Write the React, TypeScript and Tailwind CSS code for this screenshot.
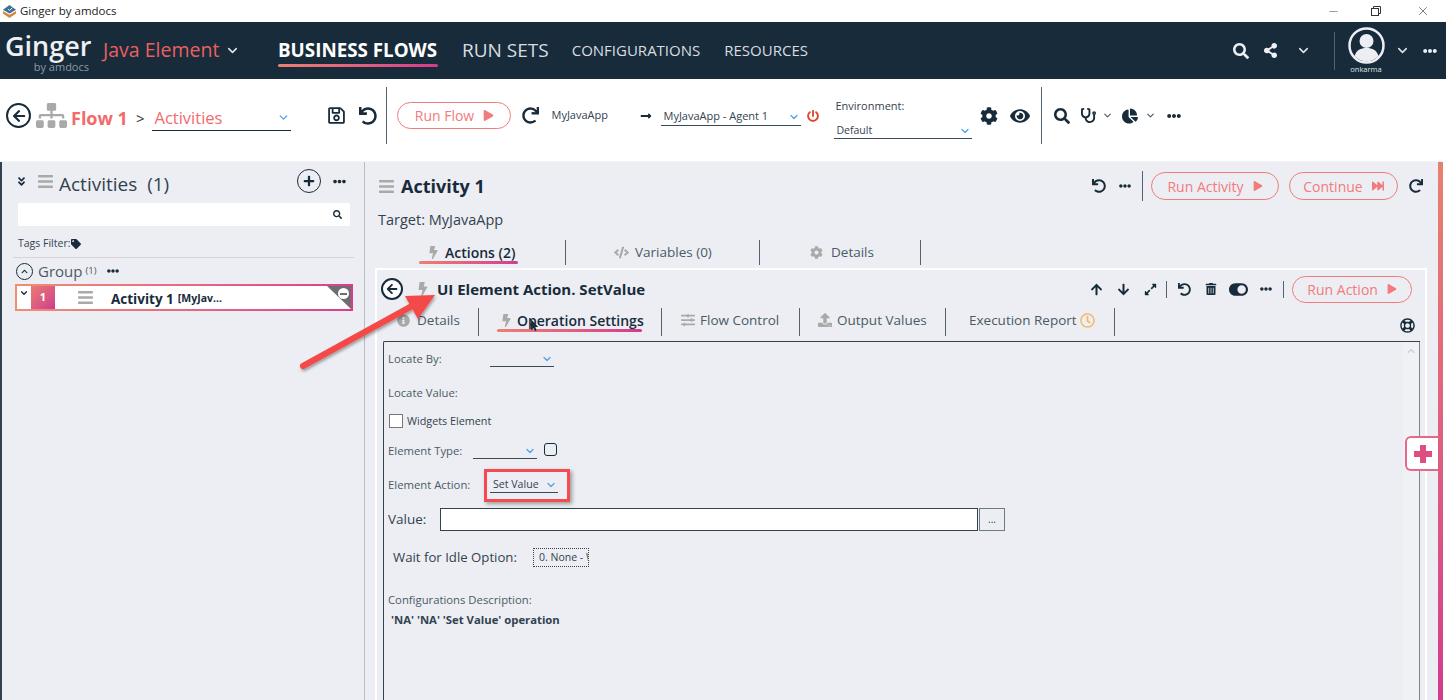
import {
  FaArrowDown,
  FaArrowUp,
  FaBars,
  FaBolt,
  FaChartPie,
  FaChevronUp,
  FaCode,
  FaCog,
  FaEllipsisH,
  FaExpandAlt,
  FaEye,
  FaFastForward,
  FaInfoCircle,
  FaRegLifeRing,
  FaLongArrowAltRight,
  FaPlay,
  FaPlus,
  FaPowerOff,
  FaRedo,
  FaRegClock,
  FaRegSave,
  FaSearch,
  FaShareAlt,
  FaSitemap,
  FaStethoscope,
  FaTag,
  FaToggleOn,
  FaTrashAlt,
  FaUndo,
  FaUpload,
  FaAngleDoubleDown,
  FaArrowLeft,
  FaMousePointer,
  FaSlidersH,
} from "react-icons/fa";
import { ChevronDown, Minus, X } from "lucide-react";
import type { ReactNode } from "react";

const dark = "#172b3a";

function BackCircle({ size }: { size: "lg" | "md" }) {
  return (
    <span
      className={
        size === "lg"
          ? "flex h-[25px] w-[25px] shrink-0 items-center justify-center rounded-full border-2 border-[#172b3a] bg-white"
          : "flex h-[22px] w-[22px] shrink-0 items-center justify-center rounded-full border-2 border-[#172b3a] bg-white"
      }
    >
      <FaArrowLeft size={size === "lg" ? 14 : 12} color={dark} />
    </span>
  );
}

function Chevron({ color = "#4da3e8", size = 14 }: { color?: string; size?: number }) {
  return <ChevronDown size={size} color={color} strokeWidth={2.5} />;
}

function RunButton({ label, wide, icon, height }: { label: string; wide: string; icon: ReactNode; height: string }) {
  return (
    <span
      className={`flex shrink-0 items-center justify-center gap-[9px] rounded-full border border-[#f27b7b] text-[14px] text-[#f27b7b] ${wide} ${height}`}
    >
      {label}
      {icon}
    </span>
  );
}

function Underline({ className }: { className: string }) {
  return <span className={`block h-[3px] rounded-sm bg-linear-to-r from-[#ea8070] to-[#d43a8c] ${className}`} />;
}

function Divider({ className }: { className: string }) {
  return <span className={`block w-px shrink-0 bg-[#55636f] ${className}`} />;
}

function Avatar() {
  return (
    <svg width="37" height="37" viewBox="0 0 37 37">
      <circle cx="18.5" cy="18.5" r="17" fill="none" stroke="#eceef3" strokeWidth="2.5" />
      <circle cx="18.5" cy="14" r="7" fill="#eceef3" />
      <path d="M6.5 29c2-6 6-8 12-8s10 2 12 8a16 16 0 0 1-24 0z" fill="#eceef3" />
    </svg>
  );
}

function TitleBar() {
  return (
    <div className="flex h-[22px] shrink-0 items-center bg-white pl-[2px] text-[11.5px] text-[#222]">
      <svg width="15" height="15" viewBox="0 0 16 16">
        <path d="M8 1l7 5-7 4-7-4z" fill="#3f6f96" />
        <path d="M1 7.5l7 4 7-4v2.5l-7 5-7-5z" fill="#d9863c" />
        <path d="M6.5 5.5l1.5 1.5 3-3" stroke="#fff" strokeWidth="1" fill="none" />
      </svg>
      <span className="ml-[3px]">Ginger by amdocs</span>
      <span className="ml-auto flex items-center">
        <Minus size={13} color="#666" strokeWidth={1.2} className="mr-[31px]" />
        <svg width="10" height="10" viewBox="0 0 10 10" className="mr-[35px]">
          <rect x="0.5" y="2.5" width="7" height="7" fill="none" stroke="#333" />
          <path d="M2.5 2.5v-2h7v7h-2" fill="none" stroke="#333" />
        </svg>
        <X size={14} color="#333" strokeWidth={1.1} className="mr-[16px]" />
      </span>
    </div>
  );
}

function Header() {
  return (
    <div className="flex h-[57px] shrink-0 items-center bg-[#172b3a]">
      <div className="mt-[2px] ml-[5px] flex w-[90px] shrink-0 flex-col">
        <span className="text-[27px] leading-[30px] font-semibold text-[#eef0f3]">Ginger</span>
        <span className="mr-[6px] text-right text-[11px] leading-[11px] text-[#8f9aa3]">by amdocs</span>
      </div>
      <span className="ml-[8px] w-[118px] shrink-0 pb-[2px] text-[19.5px] text-[#ed5f5f]">Java Element</span>
      <ChevronDown size={15} color="#dfe3e7" strokeWidth={2.5} className="ml-[4px]" />
      <div className="relative ml-[38px] flex h-[57px] w-[160px] shrink-0 items-center">
        <span className="text-[18.8px] font-bold whitespace-nowrap text-white">BUSINESS FLOWS</span>
        <Underline className="absolute bottom-[12px] left-0 w-[160px]" />
      </div>
      <span className="ml-[24px] shrink-0 text-[19px] text-[#d9dde1]">RUN SETS</span>
      <span className="ml-[23px] shrink-0 text-[15px] text-[#d9dde1]">CONFIGURATIONS</span>
      <span className="ml-[24px] shrink-0 text-[15px] text-[#d9dde1]">RESOURCES</span>
      <div className="ml-auto flex items-center pr-[9px]">
        <FaSearch size={16} color="#eef0f3" />
        <FaShareAlt size={15} color="#eef0f3" className="ml-[14px]" />
        <ChevronDown size={15} color="#dfe3e7" strokeWidth={2.5} className="ml-[18px]" />
        <Divider className="ml-[23px] h-[38px] bg-[#8b96a0]" />
        <div className="ml-[12px] flex w-[38px] flex-col items-center">
          <Avatar />
          <span className="text-[7.5px] leading-[10px] text-[#dfe3e7]">onkarma</span>
        </div>
        <ChevronDown size={15} color="#dfe3e7" strokeWidth={2.5} className="ml-[10px]" />
        <FaEllipsisH size={14} color="#eceef3" className="ml-[13px]" />
      </div>
    </div>
  );
}

function Toolbar() {
  return (
    <div className="flex h-[83px] shrink-0 items-center border-b border-[#f3f3f5] bg-white pb-[9px] pl-[6px]">
      <BackCircle size="lg" />
      <FaSitemap size={31} color="#a9a9a9" className="ml-[5px]" />
      <span className="mt-[5px] ml-[4px] text-[18px] font-bold text-[#f26b6b]">Flow 1</span>
      <span className="mt-[5px] ml-[8px] text-[15px] text-[#333]">&gt;</span>
      <div className="mt-[5px] ml-[8px] flex h-[26px] w-[139px] shrink-0 items-center justify-between border-b border-[#172b3a] pr-[1px] pl-[2px]">
        <span className="pt-[2px] text-[16.5px] text-[#f26b6b]">Activities</span>
        <Chevron size={13} />
      </div>
      <FaRegSave size={19} color={dark} className="ml-[36px]" />
      <FaUndo size={18} color={dark} className="ml-[13px]" />
      <Divider className="ml-[9px] h-[57px] bg-[#8a949c]" />
      <RunButton
        label="Run Flow"
        wide="ml-[10px] w-[114px]"
        height="h-[27px]"
        icon={<FaPlay size={11} color="#f27b7b" />}
      />
      <FaRedo size={17} color={dark} className="ml-[11px]" />
      <span className="ml-[12px] w-[58px] text-[11px] text-[#33424f]">MyJavaApp</span>
      <FaLongArrowAltRight size={12} color={dark} className="ml-[31px]" />
      <div className="mt-[3px] ml-[9px] flex h-[18px] w-[140px] shrink-0 items-center justify-between border-b border-[#3b4a57] pr-[1px] pl-[2px]">
        <span className="text-[11px] text-[#33424f]">MyJavaApp - Agent 1</span>
        <Chevron size={12} />
      </div>
      <FaPowerOff size={12} color="#e0452c" className="ml-[6px]" />
      <div className="mt-[5px] ml-[15px] flex w-[138px] shrink-0 flex-col">
        <span className="pl-[1px] text-[11px] leading-[15px] text-[#33424f]">Environment:</span>
        <div className="mt-[11px] flex h-[15px] items-center justify-between border-b border-[#3b4a57] pr-[1px] pl-[2px]">
          <span className="text-[10.5px] text-[#33424f]">Default</span>
          <Chevron size={12} />
        </div>
      </div>
      <FaCog size={18} color={dark} className="ml-[8px]" />
      <FaEye size={20} color={dark} className="ml-[12px]" />
      <Divider className="ml-[11px] h-[57px]" />
      <FaSearch size={16} color={dark} className="ml-[12px]" />
      <FaStethoscope size={15} color={dark} className="ml-[11px]" />
      <ChevronDown size={11} color="#4b5a66" strokeWidth={2.5} className="ml-[6px]" />
      <FaChartPie size={16} color={dark} className="ml-[9px]" />
      <ChevronDown size={11} color="#4b5a66" strokeWidth={2.5} className="ml-[7px]" />
      <FaEllipsisH size={14} color={dark} className="ml-[11px]" />
    </div>
  );
}

function LeftPanel() {
  return (
    <div className="w-[365px] shrink-0 border-r border-l-2 border-r-[#b9bdc3] border-l-[#33424f] pt-[6px]">
      <div className="flex h-[26px] items-center pl-[14px]">
        <FaAngleDoubleDown size={11} color={dark} />
        <FaBars size={17} color="#a9a9a9" className="ml-[10px]" />
        <span className="ml-[5px] pt-[6px] text-[19px] text-[#33424f]">Activities&nbsp; (1)</span>
        <span className="ml-[128px] flex h-[24px] w-[24px] items-center justify-center rounded-full border border-[#172b3a]">
          <FaPlus size={12} color={dark} />
        </span>
        <FaEllipsisH size={13} color={dark} className="ml-[12px]" />
      </div>
      <div className="mt-[9px] ml-[16px] flex h-[23px] w-[332px] items-center justify-end bg-white pr-[8px]">
        <FaSearch size={9} color={dark} />
      </div>
      <div className="mt-[10px] ml-[16px] flex h-[16px] items-center text-[10.5px] text-[#33424f]">
        Tags Filter:
        <FaTag size={10} color={dark} className="ml-[1px]" />
      </div>
      <div className="mt-[5px] ml-[11px] h-px w-[341px] bg-[#d4d6db]" />
      <div className="mt-[4px] ml-[14px] flex h-[18px] items-center">
        <span className="flex h-[17px] w-[17px] items-center justify-center rounded-full border border-[#172b3a]">
          <FaChevronUp size={7} color={dark} />
        </span>
        <span className="ml-[5px] text-[15px] text-[#4b5a66]">Group</span>
        <span className="ml-[3px] text-[9.5px] text-[#4b5a66]">(1)</span>
        <FaEllipsisH size={12} color={dark} className="ml-[11px]" />
      </div>
      <div className="mt-[4px] ml-[13px] h-[27px] w-[338px] bg-linear-to-r from-[#ef8f72] to-[#d93c8e] p-[2px]">
        <div className="relative flex h-[23px] items-center overflow-hidden bg-white">
          <ChevronDown size={10} color={dark} strokeWidth={3} className="mb-[9px] ml-[2px]" />
          <span className="ml-[2px] flex h-[23px] w-[24px] items-center justify-center bg-linear-to-br from-[#ea7b70] to-[#cf3a8c] text-[11px] font-bold text-white">
            1
          </span>
          <FaBars size={17} color="#a9a9a9" className="ml-[22px]" />
          <span className="ml-[17px] pt-[3px] text-[13.5px] font-bold text-[#172b3a]">Activity 1</span>
          <span className="ml-[4px] pt-[3px] text-[10.5px] font-bold text-[#172b3a]">[MyJav...</span>
          <span className="absolute top-0 right-0 h-0 w-0 border-t-[23px] border-l-[24px] border-t-[#6e6e6e] border-l-transparent" />
          <span className="absolute top-[2px] right-[2px] flex h-[11px] w-[11px] items-center justify-center rounded-full bg-white">
            <span className="h-[2px] w-[7px] bg-[#6e6e6e]" />
          </span>
        </div>
      </div>
    </div>
  );
}

function FormLabel({ children }: { children: ReactNode }) {
  return <span className="text-[11.3px] text-[#4b5a66]">{children}</span>;
}

function FormSelect({ width, value }: { width: string; value?: string }) {
  return (
    <span className={`mt-[4px] flex h-[16px] items-center justify-end border-b border-[#3b4a57] pr-[1px] ${width}`}>
      {value && <span className="mr-auto ml-[3px] text-[10.6px] text-[#33424f]">{value}</span>}
      <Chevron size={12} />
    </span>
  );
}

function SubTab({ icon, label, active, className }: { icon: ReactNode; label: string; active?: boolean; className: string }) {
  return (
    <span className={`flex h-full shrink-0 items-center pb-[4px] ${className}`}>
      {icon}
      <span className={active ? "text-[14px] font-semibold whitespace-nowrap text-[#172b3a]" : "text-[13.5px] whitespace-nowrap text-[#4b5a66]"}>{label}</span>
    </span>
  );
}

function ActionPanel() {
  return (
    <div className="mt-[3px] ml-[-3px] h-[432px] w-[1052px] border-x-2 border-t-2 border-white">
      <div className="flex h-[38px] items-center pl-[4px]">
        <BackCircle size="md" />
        <FaBolt size={14} color="#a9a9a9" className="ml-[13px]" />
        <span className="ml-[7px] text-[15px] font-bold whitespace-nowrap text-[#172b3a]">UI Element Action. SetValue</span>
        <FaArrowUp size={13} color={dark} className="ml-[445px]" />
        <FaArrowDown size={13} color={dark} className="ml-[14px]" />
        <FaExpandAlt size={13} color={dark} className="ml-[14px]" />
        <Divider className="ml-[9px] h-[17px]" />
        <FaUndo size={13} color={dark} className="ml-[11px]" />
        <FaTrashAlt size={12} color={dark} className="ml-[14px]" />
        <FaToggleOn size={19} color={dark} className="ml-[12px]" />
        <FaEllipsisH size={12} color={dark} className="ml-[12px]" />
        <Divider className="ml-[11px] h-[17px]" />
        <RunButton
          label="Run Action"
          wide="ml-[8px] w-[120px]"
          height="h-[27px]"
          icon={<FaPlay size={10} color="#f27b7b" />}
        />
      </div>
      <div className="flex h-[28px] items-center pl-[20px]">
        <SubTab icon={<FaInfoCircle size={13} color="#a9a9a9" className="mr-[7px]" />} label="Details" className="w-[81px]" />
        <Divider className="h-[28px]" />
        <div className="relative ml-[21px] h-full w-[161px] shrink-0">
          <SubTab icon={<FaBolt size={13} color="#a9a9a9" className="mr-[4px]" />} label="Operation Settings" active className="" />
          <Underline className="absolute top-[21px] left-[-3px] w-[145px]" />
        </div>
        <Divider className="h-[28px]" />
        <SubTab icon={<FaSlidersH size={14} color="#a9a9a9" className="mr-[5px]" />} label="Flow Control" className="ml-[19px] w-[118px]" />
        <Divider className="h-[28px]" />
        <SubTab icon={<FaUpload size={14} color="#a9a9a9" className="mr-[5px]" />} label="Output Values" className="ml-[18px] w-[127px]" />
        <Divider className="h-[28px]" />
        <SubTab label="Execution Report" icon={null} className="ml-[23px] w-[106px]" />
        <FaRegClock size={15} color="#f5b75a" className="mb-[4px] ml-[5px]" />
        <Divider className="ml-[19px] h-[28px]" />
        <FaRegLifeRing size={15} color={dark} className="mt-[6px] ml-[285px]" />
      </div>
      <div className="mt-[5px] ml-[6px] flex h-[360px] w-[1037px] rounded-tl-[2px] border-t border-l border-[#33424f]">
        <div className="w-[1019px] shrink-0 pl-[4px]">
          <div className="mt-[6px] flex h-[18px] items-center">
            <span className="w-[102px]"><FormLabel>Locate By:</FormLabel></span>
            <FormSelect width="w-[64px]" />
          </div>
          <div className="mt-[18px] flex h-[18px] items-center"><FormLabel>Locate Value:</FormLabel></div>
          <div className="mt-[10px] flex h-[18px] items-center">
            <span className="ml-[1px] h-[14px] w-[14px] border border-[#777] bg-white" />
            <span className="ml-[4px] text-[10.8px] text-[#33424f]">Widgets Element</span>
          </div>
          <div className="mt-[10px] flex h-[18px] items-center">
            <span className="w-[85px]"><FormLabel>Element Type:</FormLabel></span>
            <FormSelect width="w-[64px]" />
            <span className="ml-[7px] h-[13px] w-[13px] rounded-[3px] border-[1.5px] border-[#172b3a]" />
          </div>
          <div className="relative mt-[16px] flex h-[18px] items-center">
            <span className="w-[102px]"><FormLabel>Element Action:</FormLabel></span>
            <FormSelect width="w-[68px]" value="Set Value" />
            <span className="absolute top-[-5px] left-[96px] h-[33px] w-[86px] border-[3px] border-[#f34b4f] shadow-[2px_2px_4px_rgba(0,0,0,0.35)]" />
          </div>
          <div className="mt-[15px] flex h-[24px] items-center">
            <span className="w-[52px] text-[13.5px] text-[#33424f]">Value:</span>
            <span className="h-[23px] w-[538px] border border-[#33424f] bg-white" />
            <span className="ml-[1px] flex h-[23px] w-[26px] items-center justify-center border border-[#6d7b86] text-[10px] text-[#33424f]">...</span>
          </div>
          <div className="mt-[17px] flex h-[19px] items-center pl-[5px]">
            <span className="w-[140px] text-[13.2px] text-[#33424f]">Wait for Idle Option:</span>
            <span className="flex h-[19px] w-[56px] items-center overflow-hidden border border-dotted border-[#33424f] pl-[5px] text-[10.5px] whitespace-nowrap text-[#33424f]">
              0. None - Wait
            </span>
          </div>
          <div className="mt-[24px] flex h-[18px] items-center"><FormLabel>Configurations Description:</FormLabel></div>
          <div className="mt-[3px] pl-[3px] text-[11.3px] font-bold text-[#33424f]">'NA' 'NA' 'Set Value' operation</div>
        </div>
        <div className="flex w-[17px] shrink-0 justify-center border-r border-[#7b858e] bg-[#f0f1f5] pt-[5px]">
          <FaChevronUp size={8} color="#c9ccd1" />
        </div>
      </div>
    </div>
  );
}

function RightPanel() {
  return (
    <div className="relative min-w-0 flex-1 pt-[6px] pl-[13px]">
      <div className="flex h-[36px] items-center">
        <FaBars size={17} color="#a9a9a9" />
        <span className="ml-[6px] text-[18px] font-bold text-[#172b3a]">Activity 1</span>
        <span className="ml-auto flex items-center pr-[23px]">
          <FaUndo size={14} color={dark} />
          <FaEllipsisH size={12} color={dark} className="ml-[13px]" />
          <Divider className="ml-[11px] h-[30px]" />
          <RunButton
            label="Run Activity"
            wide="ml-[8px] w-[128px]"
            height="h-[28px]"
            icon={<FaPlay size={10} color="#f27b7b" />}
          />
          <RunButton
            label="Continue"
            wide="ml-[10px] w-[109px]"
            height="h-[28px]"
            icon={<FaFastForward size={12} color="#f27b7b" />}
          />
          <FaRedo size={14} color={dark} className="ml-[11px]" />
        </span>
      </div>
      <div className="mt-[6px] flex h-[20px] items-center text-[14.5px] text-[#33424f]">Target: MyJavaApp</div>
      <div className="mt-[10px] flex h-[25px] items-center">
        <div className="relative ml-[48px] flex h-full w-[139px] shrink-0 items-center">
          <FaBolt size={13} color="#a9a9a9" className="ml-[1px]" />
          <span className="ml-[5px] text-[14px] font-semibold text-[#172b3a]">Actions (2)</span>
          <Underline className="absolute top-[21px] left-[-7px] w-[99px]" />
        </div>
        <Divider className="h-[25px]" />
        <span className="ml-[48px] flex w-[145px] shrink-0 items-center text-[13.5px] text-[#4b5a66]">
          <FaCode size={15} color="#a9a9a9" className="mr-[6px]" />
          Variables (0)
        </span>
        <Divider className="h-[25px]" />
        <span className="ml-[50px] flex w-[110px] shrink-0 items-center text-[13.5px] text-[#4b5a66]">
          <FaCog size={13} color="#a9a9a9" className="mr-[8px]" />
          Details
        </span>
        <Divider className="h-[25px]" />
      </div>
      <ActionPanel />
      <div className="absolute top-[274px] right-[7px] flex h-[35px] w-[34px] items-center justify-center rounded-l-[6px] border-y-2 border-l-2 border-[#e8688a] bg-white">
        <svg width="20" height="20" viewBox="0 0 20 20">
          <path d="M7 1h6v6h6v6h-6v6H7v-6H1V7h6z" fill="#dc4f80" />
        </svg>
      </div>
      <div className="absolute top-0 right-[3px] bottom-0 w-[5px] bg-linear-to-b from-[#e8806e] to-[#d43a8c]" />
      <div className="absolute top-0 right-0 bottom-0 w-[3px] bg-white" />
    </div>
  );
}

export default function App() {
  return (
    <div className="relative flex h-[700px] w-[1446px] flex-col overflow-hidden bg-[#eceef3] font-['Open_Sans',sans-serif]">
      <TitleBar />
      <Header />
      <Toolbar />
      <div className="flex min-h-0 flex-1">
        <LeftPanel />
        <RightPanel />
      </div>
      {/* annotation arrow drawn on top of the screenshot */}
      <svg className="pointer-events-none absolute top-0 left-0" width="1446" height="700">
        <defs>
          <filter id="shade" x="-20%" y="-20%" width="140%" height="140%">
            <feDropShadow dx="1" dy="2" stdDeviation="1.5" floodOpacity="0.35" />
          </filter>
        </defs>
        <g filter="url(#shade)">
          <path d="M303 366 L412 306" stroke="#f44848" strokeWidth="6" strokeLinecap="round" />
          <path d="M435 295 L405 296 L418 319 Z" fill="#f44848" />
        </g>
      </svg>
      <FaMousePointer size={11} color="#172b3a" className="absolute top-[320px] left-[529px]" />
    </div>
  );
}
